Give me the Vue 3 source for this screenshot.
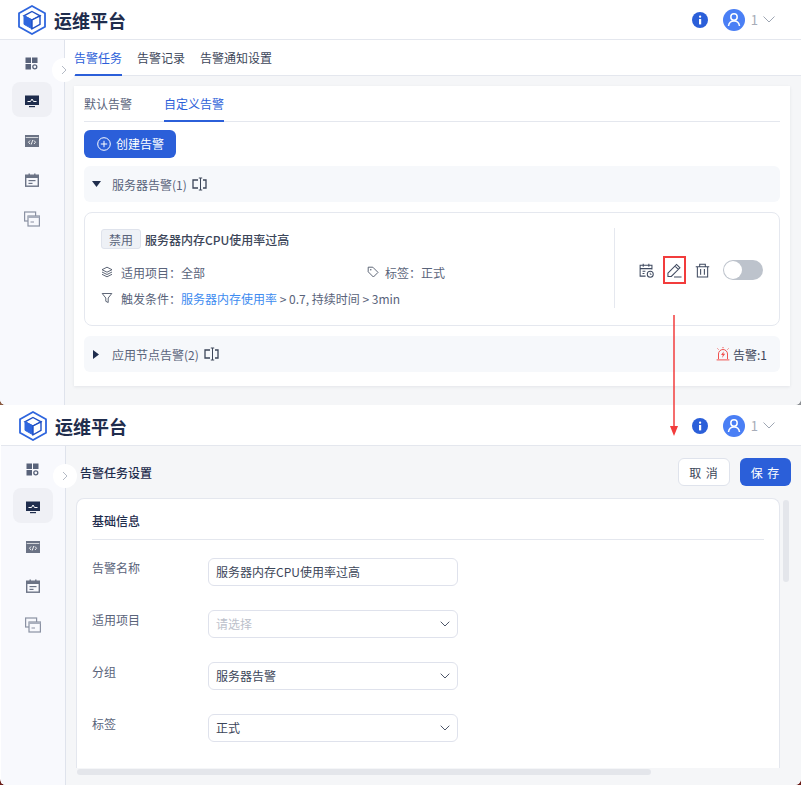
<script setup>
const navIcons = ['grid', 'monitor', 'code', 'calendar', 'windows']
const rows = [
  { label: '告警名称', value: '服务器内存CPU使用率过高', kind: 'input' },
  { label: '适用项目', value: '请选择', kind: 'placeholder' },
  { label: '分组', value: '服务器告警', kind: 'select' },
  { label: '标签', value: '正式', kind: 'select' },
]
</script>

<template>
  <div class="stage">
    <section class="win win-one">
      <header class="top">
        <div class="brand">
          <svg class="logo" viewBox="0 0 30 30"><path d="M15 1 28 8.300v13.400L15 29 2 21.700V8.300Z" fill="none" stroke="#2f66de" stroke-width="1.800"/><path d="M15 6.500 23 10.800 15 15 7 10.800Z" fill="#fff" stroke="#1f4fc4" stroke-width="1.400"/><path d="M7 10.800 15 15v8.800l-8-4.500Z" fill="#2f66de" stroke="#2f66de" stroke-width="1"/><path d="M23 10.800 15 15v8.800l8-4.500Z" fill="#fff" stroke="#1f4fc4" stroke-width="1.400"/></svg>
          <span class="brand-name">运维平台</span>
        </div>
        <div class="top-right">
          <svg class="info" viewBox="0 0 16 16"><circle cx="8" cy="8" r="8" fill="#2b5fd9"/><rect x="7" y="7" width="2.2" height="5.4" fill="#fff"/><rect x="7" y="3.6" width="2.2" height="2.2" rx="1" fill="#fff"/></svg>
          <svg class="avatar" viewBox="0 0 22 22"><circle cx="11" cy="11" r="11" fill="#4a7ff5"/><circle cx="11" cy="8" r="3.2" fill="none" stroke="#fff" stroke-width="1.5"/><path d="M5.5 17c.4-3.2 2.6-5 5.500-5s5.100 1.800 5.500 5" fill="none" stroke="#fff" stroke-width="1.5"/></svg>
          <span class="user">1</span>
          <svg class="chev-top" viewBox="0 0 12 7"><path d="M.5.5 6 6l5.500-5.500" fill="none" stroke="#9ea6b3" stroke-width="1"/></svg>
        </div>
      </header>
      <div class="body">
        <aside class="side">
          <div v-for="n in navIcons" :key="n" class="nav" :class="{ active: n === 'monitor' }">
            <svg viewBox="-1 -1 16 16" class="nav-ic">
              <g v-if="n === 'grid'" fill="#59637a"><rect x="0.500" y="1.500" width="5.500" height="5.500"/><rect x="7" y="1.500" width="5.500" height="5.500"/><rect x="0.500" y="8" width="5.500" height="5.500"/><circle cx="9.800" cy="10.800" r="2" fill="none" stroke="#59637a" stroke-width="1.300"/></g>
              <g v-else-if="n === 'monitor'"><rect x="0" y="0.500" width="14" height="9.500" fill="#1f2d4d"/><path d="M2.500 6.500h3L7 4l1.500 2.500h3" fill="none" stroke="#fff" stroke-width="1"/><rect x="4" y="11" width="6" height="1.200" fill="#1f2d4d"/></g>
              <g v-else-if="n === 'code'"><rect x="0" y="1" width="14" height="12" fill="#6b7385"/><rect x="0.700" y="3" width="12.600" height="0.700" fill="#fff"/><path d="M5 6.500 3.500 8.200 5 10M9 6.500l1.500 1.700L9 10M7.800 6 6.200 10.500" fill="none" stroke="#fff" stroke-width="0.900"/></g>
              <g v-else-if="n === 'calendar'"><rect x="0.700" y="2.200" width="12.600" height="11" fill="none" stroke="#6b7385" stroke-width="1.400"/><rect x="0.700" y="2.200" width="12.600" height="2.800" fill="#6b7385"/><rect x="3.500" y="0.500" width="1.400" height="2.500" fill="#6b7385"/><rect x="9.100" y="0.500" width="1.400" height="2.500" fill="#6b7385"/><rect x="3.500" y="7" width="7" height="1.200" fill="#6b7385"/><rect x="3.500" y="9.800" width="4" height="1.200" fill="#6b7385"/></g>
              <g v-else><rect x="-0.400" y="0" width="11" height="9" fill="none" stroke="#8b92a3" stroke-width="1.200"/><rect x="3" y="4" width="11.400" height="10" fill="#f8f9fd" stroke="#8b92a3" stroke-width="1.200"/><rect x="3" y="4" width="11.400" height="2" fill="#a9afbd"/><rect x="5.500" y="9.500" width="3.500" height="1" fill="#8b92a3"/></g>
            </svg>
          </div>
          <button class="collapse"><svg viewBox="0 0 6 10"><path d="M1 1l4 4-4 4" fill="none" stroke="#b4bac5" stroke-width="1"/></svg></button>
        </aside>
        <main class="main">
          <nav class="tabs">
            <span class="tab on">告警任务</span>
            <span class="tab">告警记录</span>
            <span class="tab">告警通知设置</span>
          </nav>
          <div class="panel">
            <div class="subtabs">
              <span class="sub">默认告警</span>
              <span class="sub on">自定义告警</span>
            </div>
            <button class="create">
              <svg viewBox="0 0 14 14"><circle cx="7" cy="7" r="6.300" fill="none" stroke="#fff" stroke-width="1"/><path d="M7 3.800v6.400M3.800 7h6.400" stroke="#fff" stroke-width="1"/></svg>
              创建告警
            </button>
            <div class="group">
              <svg class="tri down" viewBox="0 0 9 6"><path d="M0 0h9L4.500 6Z" fill="#1f2d4d"/></svg>
              <span class="group-name">服务器告警(1)</span>
              <svg class="rename" viewBox="0 0 15 14"><path d="M6 3H1v8h5M11 3h3v8h-3" fill="none" stroke="#3c4659" stroke-width="1.300"/><path d="M8.500 1v12M6.800 1h3.400M6.800 13h3.400" fill="none" stroke="#3c4659" stroke-width="1"/></svg>
            </div>
            <article class="card">
              <div class="card-info">
                <div class="title-line"><span class="badge">禁用</span><strong>服务器内存CPU使用率过高</strong></div>
                <div class="meta-line">
                  <span class="meta meta-wide">
                    <svg viewBox="0 0 12 12"><path d="M6 1.200 11 3.700 6 6.200 1 3.700Z M1 6l5 2.500L11 6M1 8.300l5 2.500 5-2.500" fill="none" stroke="#4d5668" stroke-width="0.900"/></svg>
                    <span>适用项目：全部</span>
                  </span>
                  <span class="meta meta-tag">
                    <svg viewBox="0 0 12 12"><path d="M1.200 1.200h4.600L11 6.400 6.400 11 1.200 5.800Z" fill="none" stroke="#4d5668" stroke-width="0.900"/><circle cx="3.800" cy="3.800" r="0.700" fill="#4d5668"/></svg>
                    <span>标签：正式</span>
                  </span>
                </div>
                <div class="meta-line">
                  <span class="meta">
                    <svg viewBox="0 0 12 12"><path d="M1.200 1.500h9.600L7.200 6v4.500L4.800 9.300V6Z" fill="none" stroke="#4d5668" stroke-width="0.900"/></svg>
                    <span>触发条件：<span class="link">服务器内存使用率</span> &gt; 0.7, 持续时间 &gt; 3min</span>
                  </span>
                </div>
              </div>
              <div class="card-actions">
                <svg class="act" viewBox="0 0 16 16"><path d="M7 14H1.200V2.500h12.600V7M1.200 6h12.600M4.500 .8v3.200M10.500 .8v3.200M3.800 8.800h3M3.800 11.300h2" fill="none" stroke="#3f4a60" stroke-width="1.100"/><circle cx="12" cy="12" r="3.200" fill="none" stroke="#3f4a60" stroke-width="1.100"/><path d="M12 10.400v1.800h1.400" fill="none" stroke="#3f4a60" stroke-width="0.800"/></svg>
                <span class="edit-box">
                  <svg class="act" viewBox="0 0 16 16"><path d="M1 10.800 10.200 1.500l3.600 3.600-9.200 9.200H1ZM8.500 3.300l3.600 3.600M7.500 15h8" fill="none" stroke="#3f4a60" stroke-width="1.100"/></svg>
                </span>
                <svg class="act" viewBox="0 0 16 16"><path d="M.8 4h14.400M5 4V1.300h6V4M2.500 4v11h11V4M6 6.500v6M10 6.500v6" fill="none" stroke="#3f4a60" stroke-width="1.100"/></svg>
                <span class="switch"><i></i></span>
              </div>
            </article>
            <div class="group group-two">
              <svg class="tri right" viewBox="0 0 6 9"><path d="M0 0v9l6-4.500Z" fill="#1f2d4d"/></svg>
              <span class="group-name">应用节点告警(2)</span>
              <svg class="rename" viewBox="0 0 15 14"><path d="M6 3H1v8h5M11 3h3v8h-3" fill="none" stroke="#3c4659" stroke-width="1.300"/><path d="M8.500 1v12M6.800 1h3.400M6.800 13h3.400" fill="none" stroke="#3c4659" stroke-width="1"/></svg>
              <span class="alert">
                <svg viewBox="0 0 14 14"><path d="M2.500 12V7a4.500 4.500 0 0 1 9 0v5M.6 12.900h12.800M7 0v1.200M1.500 1.500l1 1M12.500 1.500l-1 1" fill="none" stroke="#f0524f" stroke-width="1"/><path d="M7.800 4.300 5 8h1.800l-.8 3 3.200-4.200H7.300Z" fill="#f0524f"/></svg>
                <span>告警:1</span>
              </span>
            </div>
          </div>
        </main>
      </div>
    </section>

    <section class="win win-two">
      <header class="top">
        <div class="brand">
          <svg class="logo" viewBox="0 0 30 30"><path d="M15 1 28 8.300v13.400L15 29 2 21.700V8.300Z" fill="none" stroke="#2f66de" stroke-width="1.800"/><path d="M15 6.500 23 10.800 15 15 7 10.800Z" fill="#fff" stroke="#1f4fc4" stroke-width="1.400"/><path d="M7 10.800 15 15v8.800l-8-4.500Z" fill="#2f66de" stroke="#2f66de" stroke-width="1"/><path d="M23 10.800 15 15v8.800l8-4.500Z" fill="#fff" stroke="#1f4fc4" stroke-width="1.400"/></svg>
          <span class="brand-name">运维平台</span>
        </div>
        <div class="top-right">
          <svg class="info" viewBox="0 0 16 16"><circle cx="8" cy="8" r="8" fill="#2b5fd9"/><rect x="7" y="7" width="2.2" height="5.4" fill="#fff"/><rect x="7" y="3.6" width="2.2" height="2.2" rx="1" fill="#fff"/></svg>
          <svg class="avatar" viewBox="0 0 22 22"><circle cx="11" cy="11" r="11" fill="#4a7ff5"/><circle cx="11" cy="8" r="3.2" fill="none" stroke="#fff" stroke-width="1.5"/><path d="M5.5 17c.4-3.2 2.6-5 5.500-5s5.100 1.800 5.500 5" fill="none" stroke="#fff" stroke-width="1.5"/></svg>
          <span class="user">1</span>
          <svg class="chev-top" viewBox="0 0 12 7"><path d="M.5.5 6 6l5.500-5.500" fill="none" stroke="#9ea6b3" stroke-width="1"/></svg>
        </div>
      </header>
      <div class="body">
        <aside class="side">
          <div v-for="n in navIcons" :key="n" class="nav" :class="{ active: n === 'monitor' }">
            <svg viewBox="-1 -1 16 16" class="nav-ic">
              <g v-if="n === 'grid'" fill="#59637a"><rect x="0.500" y="1.500" width="5.500" height="5.500"/><rect x="7" y="1.500" width="5.500" height="5.500"/><rect x="0.500" y="8" width="5.500" height="5.500"/><circle cx="9.800" cy="10.800" r="2" fill="none" stroke="#59637a" stroke-width="1.300"/></g>
              <g v-else-if="n === 'monitor'"><rect x="0" y="0.500" width="14" height="9.500" fill="#1f2d4d"/><path d="M2.500 6.500h3L7 4l1.500 2.500h3" fill="none" stroke="#fff" stroke-width="1"/><rect x="4" y="11" width="6" height="1.200" fill="#1f2d4d"/></g>
              <g v-else-if="n === 'code'"><rect x="0" y="1" width="14" height="12" fill="#6b7385"/><rect x="0.700" y="3" width="12.600" height="0.700" fill="#fff"/><path d="M5 6.500 3.500 8.200 5 10M9 6.500l1.500 1.700L9 10M7.800 6 6.200 10.500" fill="none" stroke="#fff" stroke-width="0.900"/></g>
              <g v-else-if="n === 'calendar'"><rect x="0.700" y="2.200" width="12.600" height="11" fill="none" stroke="#6b7385" stroke-width="1.400"/><rect x="0.700" y="2.200" width="12.600" height="2.800" fill="#6b7385"/><rect x="3.500" y="0.500" width="1.400" height="2.500" fill="#6b7385"/><rect x="9.100" y="0.500" width="1.400" height="2.500" fill="#6b7385"/><rect x="3.500" y="7" width="7" height="1.200" fill="#6b7385"/><rect x="3.500" y="9.800" width="4" height="1.200" fill="#6b7385"/></g>
              <g v-else><rect x="-0.400" y="0" width="11" height="9" fill="none" stroke="#8b92a3" stroke-width="1.200"/><rect x="3" y="4" width="11.400" height="10" fill="#f8f9fd" stroke="#8b92a3" stroke-width="1.200"/><rect x="3" y="4" width="11.400" height="2" fill="#a9afbd"/><rect x="5.500" y="9.500" width="3.500" height="1" fill="#8b92a3"/></g>
            </svg>
          </div>
          <button class="collapse"><svg viewBox="0 0 6 10"><path d="M1 1l4 4-4 4" fill="none" stroke="#b4bac5" stroke-width="1"/></svg></button>
        </aside>
        <main class="main form-main">
          <div class="form-head">
            <h2>告警任务设置</h2>
            <div class="form-btns">
              <button class="btn-cancel">取 消</button>
              <button class="btn-save">保 存</button>
            </div>
          </div>
          <div class="form-scroll">
            <div class="form-card">
              <h3>基础信息</h3>
              <div v-for="r in rows" :key="r.label" class="form-row">
                <label>{{ r.label }}</label>
                <div class="field" :class="r.kind">
                  <span>{{ r.value }}</span>
                  <svg v-if="r.kind !== 'input'" viewBox="0 0 10 6"><path d="M.7.700 5 5 9.300.700" fill="none" stroke="#4d5668" stroke-width="1"/></svg>
                </div>
              </div>
            </div>
            <div class="vbar"></div>
            <div class="hbar"></div>
          </div>
        </main>
      </div>
    </section>

    <svg class="arrow" viewBox="0 0 12 121"><path d="M6 0v112" stroke="#f23c3c" stroke-width="1.500"/><path d="M2 111h8l-4 10Z" fill="#f23c3c"/></svg>
  </div>
</template>

<style>
html, body { margin: 0; background: #6a1d18; }
</style>

<style scoped>
.stage { position: relative; width: 801px; height: 785px; overflow: hidden; background: linear-gradient(90deg, #8a5a42 50%, #8d9094 50%) 0 0 / 100% 405px no-repeat, #6a1d18; font-family: "Noto Sans CJK SC", "Noto Sans", sans-serif; font-size: 12px; color: #3c4659; }
.win { display: flex; flex-direction: column; overflow: hidden; background: #f5f6f8; }
.win-one { height: 405px; border-radius: 0 0 6px 6px; }
.win-two { height: 380px; box-sizing: border-box; padding-left: 1px; background: #fff; border-radius: 0 0 6px 6px; }
svg { display: block; flex: none; }
.top { height: 39px; flex: none; display: flex; align-items: center; justify-content: space-between; background: #fff; border-bottom: 1px solid #e4e7ee; padding: 0 26px 0 17px; }
.win-two .top { padding-top: 1px; box-sizing: border-box; height: 41px; }
.brand { display: flex; align-items: center; gap: 7px; }
.logo { width: 30px; height: 30px; }
.brand-name { font-size: 18px; font-weight: 700; color: #1f2d4d; letter-spacing: 0; }
.top-right { display: flex; align-items: center; }
.info { width: 16px; height: 16px; margin-right: 15px; }
.avatar { width: 22px; height: 22px; margin-right: 6px; }
.user { color: #a7adb8; font-size: 13px; margin-right: 5px; }
.chev-top { width: 12px; height: 7px; }
.body { flex: 1; min-height: 0; display: flex; background: #f5f6f8; }
.side { position: relative; width: 65px; flex: none; box-sizing: border-box; background: #f8f9fd; border-right: 1px solid #dfe3ec; padding-top: 3px; padding-right: 1px; display: flex; flex-direction: column; align-items: center; gap: 4px; }
.nav { width: 40px; height: 35px; box-sizing: border-box; padding-top: 4px; display: flex; align-items: center; justify-content: center; border-radius: 8px; }
.nav.active { background: #eff0f5; }
.nav-ic { width: 16px; height: 16px; }
.collapse { position: absolute; top: 18px; right: -12px; width: 24px; height: 24px; padding: 0; border: 0; border-radius: 50%; background: #fff; display: flex; align-items: center; justify-content: center; z-index: 2; }
.collapse svg { width: 6px; height: 10px; }
.main { flex: 1; min-width: 0; display: flex; flex-direction: column; }
.tabs { height: 35px; flex: none; display: flex; gap: 15px; align-items: stretch; background: #fff; border-bottom: 1px solid #e4e7ee; padding-left: 9px; }
.tab { display: flex; align-items: center; padding-top: 1px; box-sizing: border-box; height: 36px; color: #3c4659; border-bottom: 2px solid transparent; }
.tab.on { color: #2b5fd9; border-bottom-color: #2b5fd9; }
.panel { margin: 10px 11px 0 9px; height: 300px; background: #fff; box-shadow: 0 1px 3px rgba(30, 40, 70, .08); padding: 0 10px; box-sizing: border-box; }
.subtabs { height: 36px; box-sizing: border-box; display: flex; gap: 32px; border-bottom: 1px solid #e4e7ee; }
.sub { display: flex; align-items: center; height: 36px; padding-top: 1px; box-sizing: border-box; color: #59637a; border-bottom: 2px solid transparent; }
.sub.on { color: #2b5fd9; border-bottom-color: #2b5fd9; }
.create { display: flex; align-items: center; gap: 5px; width: 92px; height: 28px; margin-top: 8px; padding: 0 0 1px 13px; box-sizing: border-box; border: 0; border-radius: 6px; background: #2b5fd9; color: #fff; font: inherit; }
.create svg { width: 14px; height: 14px; }
.group { display: flex; align-items: center; height: 36px; margin-top: 8px; background: #f6f8fb; border-radius: 6px; }
.tri.down { width: 9px; height: 6px; margin-left: 8px; }
.tri.right { width: 6px; height: 9px; margin-left: 9px; }
.group-name { color: #59637a; margin-left: 11px; margin-right: 5px; }
.group-two .group-name { margin-left: 13px; }
.rename { width: 15px; height: 14px; }
.alert { margin-left: auto; margin-right: 13px; display: flex; align-items: center; gap: 3px; }
.alert svg { width: 14px; height: 14px; }
.card { display: flex; height: 114px; margin-top: 10px; box-sizing: border-box; border: 1px solid #e5e8ef; border-radius: 8px; }
.group-two { margin-top: 10px; }
.card-info { flex: 1; min-width: 0; margin: 15px 0 17px; padding: 0 0 0 16px; border-right: 1px solid #e5e8ef; }
.title-line { display: flex; align-items: center; gap: 4px; height: 22px; }
.badge { width: 40px; height: 20px; box-sizing: border-box; display: flex; align-items: center; justify-content: center; background: #eef1f6; border: 1px solid #dfe3ec; border-radius: 3px; color: #59637a; }
.title-line strong { font-weight: 500; color: #3c4659; }
.meta-line { display: flex; height: 26px; align-items: center; }
.title-line + .meta-line { margin-top: 9px; }
.meta { display: flex; align-items: center; gap: 8px; color: #59637a; white-space: nowrap; }
.meta svg { width: 12px; height: 12px; }
.meta-wide { width: 266px; }
.meta-tag { gap: 6px; }
.link { color: #3d8bf0; }
.card-actions { width: 164px; flex: none; display: flex; align-items: center; padding: 2px 0 0 24px; box-sizing: border-box; }
.act { width: 15px; height: 15px; }
.edit-box { width: 23px; height: 28px; box-sizing: border-box; display: flex; align-items: center; justify-content: center; border: 2px solid #f23c3c; margin: 0 9px; }
.switch { width: 40px; height: 20px; margin-left: 13px; border-radius: 10px; background: #bdc3cc; position: relative; display: block; }
.switch i { position: absolute; left: 1px; top: 1px; width: 18px; height: 18px; border-radius: 50%; background: #fff; }
.form-main { position: relative; }
.form-head { height: 40px; flex: none; display: flex; align-items: center; justify-content: space-between; padding: 0 10px 0 14px; margin-top: 6px; }
.form-head h2 { margin: 0; font-size: 12px; font-weight: 500; color: #1f2d4d; }
.form-btns { display: flex; gap: 10px; }
.form-btns button { width: 52px; height: 28px; border-radius: 6px; font: inherit; letter-spacing: 1px; padding: 0; box-sizing: border-box; }
.btn-cancel { background: #fff; border: 1px solid #dfe3ec; color: #3c4659; }
.btn-save { background: #2b5fd9; border: 0; color: #fff; width: 51px !important; }
.form-scroll { flex: 1; min-height: 0; position: relative; padding-left: 10px; }
.form-card { width: 704px; height: 270px; box-sizing: border-box; background: #fff; border: 1px solid #e4e7ee; border-bottom: 0; border-radius: 8px 8px 0 0; padding: 0 15px; margin-top: 6px; overflow: hidden; }
.form-card h3 { margin: 0; height: 40px; line-height: 43px; font-size: 12px; font-weight: 500; color: #1f2d4d; border-bottom: 1px solid #e4e7ee; }
.form-row { display: flex; height: 52px; align-items: flex-start; }
.form-row:first-of-type { margin-top: 18px; }
.form-row label { width: 116px; flex: none; color: #59637a; line-height: 20px; }
.field { width: 250px; height: 28px; box-sizing: border-box; border: 1px solid #dfe2ec; border-radius: 6px; padding: 0 7px 1px 7px; display: flex; align-items: center; justify-content: space-between; color: #3c4659; }
.field svg { width: 10px; height: 6px; }
.placeholder span { color: #bcc1cb; }
.vbar { position: absolute; left: 717px; top: 8px; width: 6px; height: 82px; border-radius: 3px; background: #e4e6eb; }
.hbar { position: absolute; left: 11px; top: 277px; width: 574px; height: 6px; border-radius: 3px; background: #e4e6eb; }
.arrow { position: absolute; left: 668px; top: 315px; width: 12px; height: 121px; z-index: 5; }
</style>
